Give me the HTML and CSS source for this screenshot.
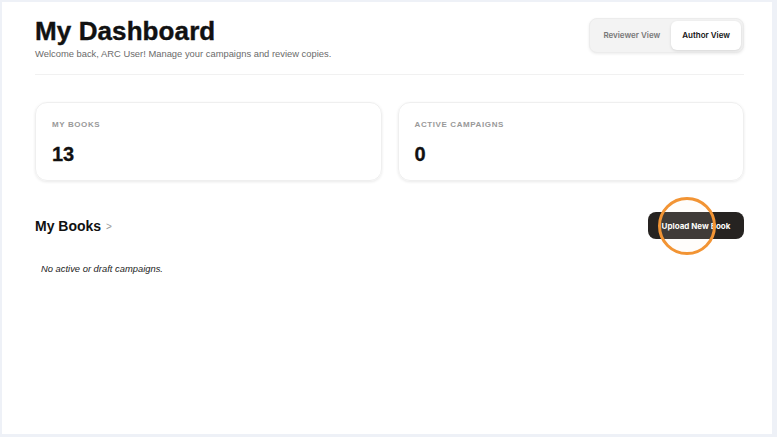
FILE: index.html
```html
<!DOCTYPE html>
<html>
<head>
<meta charset="utf-8">
<link rel="stylesheet" href="styles.css">
</head>
<body>
<div class="panel">
  <header class="top">
    <div class="titles">
      <h1 class="title">My Dashboard</h1>
      <p class="subtitle">Welcome back, ARC User! Manage your campaigns and review copies.</p>
    </div>
    <div class="toggle">
      <span class="tab">Reviewer View</span>
      <span class="tab active">Author View</span>
    </div>
  </header>
  <div class="divider"></div>
  <section class="stats">
    <div class="card">
      <div class="label">MY BOOKS</div>
      <div class="num">13</div>
    </div>
    <div class="card">
      <div class="label">ACTIVE CAMPAIGNS</div>
      <div class="num">0</div>
    </div>
  </section>
  <section class="books-head">
    <h2 class="books-title">My Books <span class="chev">&gt;</span></h2>
    <div class="btn-wrap">
      <button class="btn">Upload New Book</button>
      <span class="ring"></span>
    </div>
  </section>
  <p class="empty">No active or draft campaigns.</p>
</div>
</body>
</html>
```
FILE: styles.css
```css
html, body { margin: 0; padding: 0; }
body {
  background: #eef1f7;
  width: 777px;
  height: 437px;
  padding: 2px 5px 3px 2px;
  box-sizing: border-box;
  font-family: "Liberation Sans", Arial, sans-serif;
}
.panel {
  background: #ffffff;
  height: 432px;
  box-sizing: border-box;
  padding: 16px 28px 0 33px;
}
.top {
  display: flex;
  justify-content: space-between;
  align-items: flex-start;
}
.title {
  margin: 0;
  font-size: 26px;
  font-weight: 900;
  line-height: 26px;
  color: #111;
  letter-spacing: 0.1px;
  -webkit-text-stroke: 0.4px #111;
}
.subtitle {
  margin: 4px 0 0 0;
  font-size: 9.4px;
  color: #6b6b6b;
  line-height: 12px;
}
.toggle {
  display: flex;
  background: #f3f3f3;
  border: 1px solid #ececec;
  border-radius: 8px;
  padding: 2px;
  box-shadow: 0 1px 3px rgba(0,0,0,0.08);
}
.tab {
  font-family: Inter, "Liberation Sans", sans-serif;
  font-size: 8px;
  font-weight: 600;
  color: #777;
  padding: 10px 11px;
  line-height: 9px;
  border-radius: 6px;
}
.tab.active {
  background: #fff;
  color: #111;
  box-shadow: 0 1px 3px rgba(0,0,0,0.12);
}
.divider {
  height: 1px;
  background: #f1f1f1;
  margin-top: 14px;
}
.stats {
  display: grid;
  grid-template-columns: 1fr 1fr;
  gap: 16px;
  margin-top: 27px;
}
.card {
  height: 79px;
  box-sizing: border-box;
  border: 1px solid #efefef;
  border-radius: 12px;
  box-shadow: 0 1px 3px rgba(0,0,0,0.09);
  padding: 17px 16px;
}
.label {
  font-size: 8px;
  font-weight: 700;
  color: #999;
  letter-spacing: 0.6px;
  line-height: 10px;
}
.num {
  margin-top: 14px;
  font-size: 20px;
  font-weight: 900;
  color: #111;
  line-height: 20px;
  -webkit-text-stroke: 0.3px #111;
}
.books-head {
  display: flex;
  justify-content: space-between;
  align-items: center;
  margin-top: 31px;
}
.books-title {
  margin: 0;
  font-size: 14px;
  font-weight: 700;
  color: #111;
}
.chev {
  font-weight: 400;
  color: #999;
  font-size: 10px;
  margin-left: 1px;
  position: relative;
  top: -1px;
}
.btn-wrap { position: relative; }
.btn {
  font-family: Inter, "Liberation Sans", sans-serif;
  background: #262321;
  color: #fff;
  border: none;
  border-radius: 8px;
  font-size: 8px;
  font-weight: 700;
  height: 27px;
  width: 96px;
  padding: 0;
}
.ring {
  position: absolute;
  left: 10px;
  top: -15px;
  width: 58px;
  height: 58px;
  box-sizing: border-box;
  border: 3px solid #f29434;
  border-radius: 50%;
  background: rgba(255, 240, 225, 0.12);
}
.empty {
  margin: 24px 0 0 6px;
  font-size: 9.4px;
  font-style: italic;
  color: #222;
}
```
